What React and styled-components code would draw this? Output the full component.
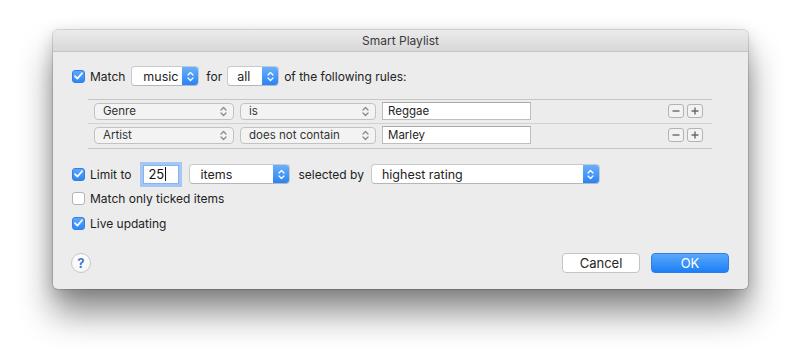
import React from "react";
import styled, { createGlobalStyle } from "styled-components";

const Global = createGlobalStyle`
  html, body { margin: 0; padding: 0; background: #ffffff; }
  body { font-family: "Inter", "Liberation Sans", sans-serif; font-size: 12px; color: #242424; }
`;

const Page = styled.div`
  width: 800px;
  height: 363px;
  padding: 30px 0 0 53px;
  box-sizing: border-box;
  overflow: hidden;
`;

const Window = styled.div`
  width: 695px;
  background: #ececec;
  border-radius: 5px;
  box-shadow: 0 0 0 1px rgba(0, 0, 0, 0.13), 0 24px 34px rgba(0, 0, 0, 0.45), 0 4px 16px rgba(0, 0, 0, 0.16);
  display: flex;
  flex-direction: column;
`;

const TitleBar = styled.div`
  height: 21px;
  border-bottom: 1px solid #c4c4c4;
  background: linear-gradient(#ebebeb, #d8d8d8);
  border-radius: 5px 5px 0 0;
  display: flex;
  align-items: center;
  justify-content: center;
  font-size: 12px;
  color: #3a3a3a;
`;

const Content = styled.div`
  padding: 14px 19px 16px 19px;
  display: flex;
  flex-direction: column;
`;

const Row = styled.div`
  display: flex;
  align-items: center;
  height: ${(p) => p.$h || 20}px;
  margin-top: ${(p) => p.$mt || 0}px;
`;

const Label = styled.span`
  margin: 0 ${(p) => p.$mr ?? 6}px 0 ${(p) => p.$ml || 0}px;
  white-space: nowrap;
  color: #222;
`;

const CheckBox = styled.span`
  width: 13px;
  height: 13px;
  border-radius: 3px;
  box-sizing: border-box;
  display: inline-flex;
  align-items: center;
  justify-content: center;
  margin-right: 5px;
  flex: none;
  background: ${(p) => (p.$on ? "linear-gradient(#5ea8fb, #2f86f6)" : "#ffffff")};
  border: 1px solid ${(p) => (p.$on ? "#2e7fe6" : "#b4b4b4")};
`;

const PopUp = styled.div`
  width: ${(p) => p.$w}px;
  height: ${(p) => p.$h || 20}px;
  box-sizing: border-box;
  background: #ffffff;
  border: 1px solid #c9c9c9;
  border-bottom-color: #b6b6b6;
  border-radius: 4px;
  display: flex;
  align-items: center;
  overflow: hidden;
  flex: none;
  font-size: 12.5px;
`;

const PopText = styled.span`
  flex: 1;
  padding-left: ${(p) => p.$pl || 10}px;
  white-space: nowrap;
`;

const Stepper = styled.span`
  width: 16px;
  align-self: stretch;
  background: linear-gradient(#68b0fc, #2a83f5);
  display: flex;
  align-items: center;
  justify-content: center;
`;

const RulesBox = styled.div`
  margin: 13px 17px 0 16px;
  border-top: 1px solid #c6c6c6;
  border-bottom: 1px solid #c6c6c6;
  display: flex;
  flex-direction: column;
`;

const RuleRow = styled.div`
  display: flex;
  align-items: center;
  padding: ${(p) => (p.$last ? "2px 9px 4px 6px" : "2px 9px 3px 6px")};
  border-bottom: ${(p) => (p.$last ? "none" : "1px solid #d2d2d2")};
  gap: 6px;
`;

const RulePop = styled.div`
  width: ${(p) => p.$w}px;
  height: 17px;
  box-sizing: border-box;
  border: 1px solid #c2c2c2;
  border-radius: 4px;
  background: #f3f3f3;
  display: flex;
  align-items: center;
  padding: 0 6px 0 8px;
  font-size: 11.5px;
  color: #333;
  flex: none;
`;

const Grow = styled.span`
  flex: 1;
`;

const TextField = styled.div`
  width: ${(p) => p.$w}px;
  height: ${(p) => p.$h || 18}px;
  box-sizing: border-box;
  background: #ffffff;
  border: 1px solid #bdbdbd;
  border-top-color: #a9a9a9;
  display: flex;
  align-items: center;
  padding-left: 5px;
  font-size: 11.5px;
  flex: none;
`;

const FocusField = styled(TextField)`
  border: 1px solid #86b4ee;
  box-shadow: 0 0 0 3px #a4c8f3;
  margin: 0 10px 0 4px;
  padding-left: 4px;
  font-size: 13px;
  color: #111;
`;

const Caret = styled.span`
  display: inline-block;
  width: 1px;
  height: 14px;
  background: #111;
  margin-left: 1px;
`;

const SmallBtn = styled.span`
  width: 16px;
  height: 14px;
  box-sizing: border-box;
  border: 1px solid #b3b3b3;
  border-radius: 3px;
  background: #f2f2f2;
  display: inline-flex;
  align-items: center;
  justify-content: center;
`;

const BtnGroup = styled.div`
  margin-left: auto;
  display: flex;
  gap: 3px;
`;

const Footer = styled.div`
  display: flex;
  align-items: center;
  margin-top: 20px;
  height: 20px;
`;

const HelpButton = styled.span`
  width: 20px;
  height: 20px;
  margin-left: -1px;
  box-sizing: border-box;
  border-radius: 50%;
  border: 1px solid #c8c8c8;
  background: radial-gradient(circle at 50% 35%, #ffffff, #f4f4f4);
  color: #3d7cc9;
  font-weight: 700;
  font-size: 13px;
  display: flex;
  align-items: center;
  justify-content: center;
`;

const Button = styled.span`
  width: 78px;
  height: 20px;
  box-sizing: border-box;
  border-radius: 4px;
  display: flex;
  align-items: center;
  justify-content: center;
  font-size: 13px;
  margin-left: ${(p) => p.$ml || 0}px;
  background: ${(p) => (p.$primary ? "linear-gradient(#5aa8fb, #1d7ff5)" : "#ffffff")};
  color: ${(p) => (p.$primary ? "#ffffff" : "#262626")};
  border: 1px solid ${(p) => (p.$primary ? "#2a7fe8" : "#c4c4c4")};
`;

const Check = () => (
  <svg width="9" height="8" viewBox="0 0 9 8">
    <path d="M1 4.2 L3.4 6.6 L8 1.2" fill="none" stroke="#fff" strokeWidth="1.7" strokeLinecap="round" strokeLinejoin="round" />
  </svg>
);

const Chevrons = ({ color = "#fff", w = 7 }) => (
  <svg width={w} height="11" viewBox="0 0 7 11">
    <path d="M1 4 L3.5 1.5 L6 4 M1 7 L3.5 9.5 L6 7" fill="none" stroke={color} strokeWidth="1.3" strokeLinecap="round" strokeLinejoin="round" />
  </svg>
);

const Minus = () => (
  <svg width="8" height="8" viewBox="0 0 8 8">
    <path d="M0.5 4 H7.5" stroke="#6a6a6a" strokeWidth="1.4" />
  </svg>
);
const Plus = () => (
  <svg width="8" height="8" viewBox="0 0 8 8">
    <path d="M0.5 4 H7.5 M4 0.5 V7.5" stroke="#6a6a6a" strokeWidth="1.4" />
  </svg>
);

const rules = [
  { field: "Genre", op: "is", value: "Reggae" },
  { field: "Artist", op: "does not contain", value: "Marley" },
];

export default function App() {
  return (
    <Page>
      <Global />
      <Window>
        <TitleBar>Smart Playlist</TitleBar>
        <Content>
          <Row>
            <CheckBox $on><Check /></CheckBox>
            <Label $mr={6}>Match</Label>
            <PopUp $w={68}>
              <PopText $pl={11}>music</PopText>
              <Stepper><Chevrons /></Stepper>
            </PopUp>
            <Label $ml={7} $mr={5}>for</Label>
            <PopUp $w={52}>
              <PopText $pl={9}>all</PopText>
              <Stepper><Chevrons /></Stepper>
            </PopUp>
            <Label $ml={5}>of the following rules:</Label>
          </Row>

          <RulesBox>
            {rules.map((r, i) => (
              <RuleRow key={r.field} $last={i === rules.length - 1}>
                <RulePop $w={140}>
                  <Grow>{r.field}</Grow>
                  <Chevrons color="#8a8a8a" />
                </RulePop>
                <RulePop $w={136}>
                  <Grow>{r.op}</Grow>
                  <Chevrons color="#8a8a8a" />
                </RulePop>
                <TextField $w={149}>{r.value}</TextField>
                <BtnGroup>
                  <SmallBtn><Minus /></SmallBtn>
                  <SmallBtn><Plus /></SmallBtn>
                </BtnGroup>
              </RuleRow>
            ))}
          </RulesBox>

          <Row $h={22} $mt={14}>
            <CheckBox $on><Check /></CheckBox>
            <Label $mr={8}>Limit to</Label>
            <FocusField $w={36} $h={19}>25<Caret /></FocusField>
            <PopUp $w={101}>
              <PopText>items</PopText>
              <Stepper><Chevrons /></Stepper>
            </PopUp>
            <Label $ml={8} $mr={7}>selected by</Label>
            <PopUp $w={229}>
              <PopText>highest rating</PopText>
              <Stepper><Chevrons /></Stepper>
            </PopUp>
          </Row>

          <Row $mt={3}>
            <CheckBox><span /></CheckBox>
            <Label>Match only ticked items</Label>
          </Row>
          <Row $mt={5}>
            <CheckBox $on><Check /></CheckBox>
            <Label>Live updating</Label>
          </Row>

          <Footer>
            <HelpButton>?</HelpButton>
            <Grow />
            <Button>Cancel</Button>
            <Button $primary $ml={11}>OK</Button>
          </Footer>
        </Content>
      </Window>
    </Page>
  );
}
